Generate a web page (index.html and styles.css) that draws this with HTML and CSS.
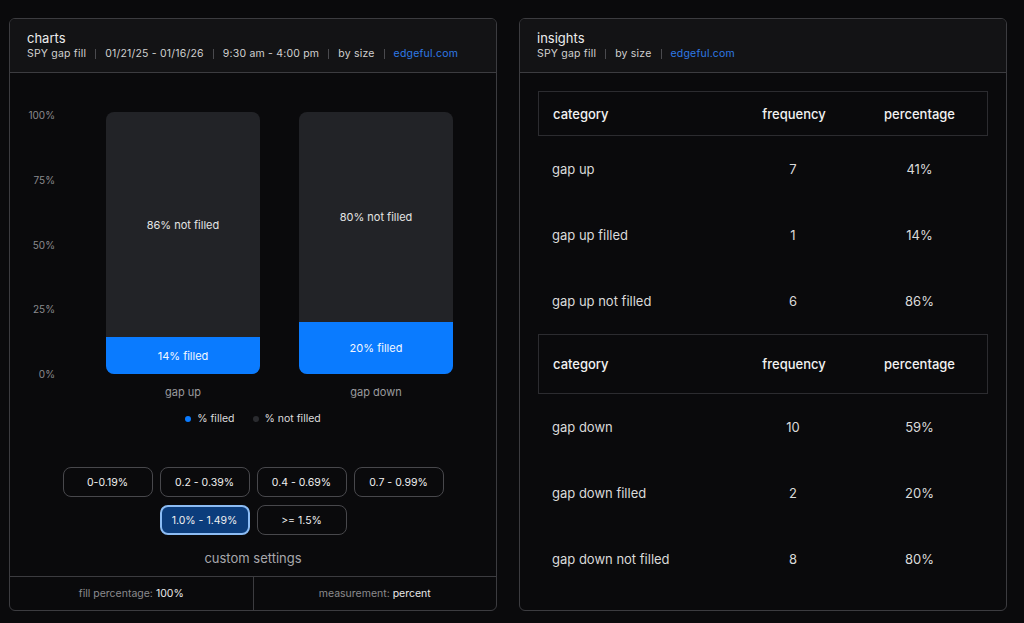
FILE: index.html
```html
<!DOCTYPE html>
<html lang="en">
  <head>
    <meta charset="UTF-8" />
    <meta name="viewport" content="width=device-width, initial-scale=1.0" />
    <title>SPY gap fill</title>
    <link rel="stylesheet" href="styles.css">
  </head>

  <body>
    <main class="page">
      <section class="card">
        <div class="card-head">
          <div class="card-title">charts</div>
          <div class="card-sub">
            <span>SPY gap fill</span><i class="sep"></i>
            <span>01/21/25 - 01/16/26</span><i class="sep"></i>
            <span>9:30 am - 4:00 pm</span><i class="sep"></i>
            <span>by size</span><i class="sep"></i>
            <span class="link">edgeful.com</span>
          </div>
        </div>

        <div class="chart-body">
          <div class="chart">
            <div class="axis">
              <span>100%</span>
              <span>75%</span>
              <span>50%</span>
              <span>25%</span>
              <span>0%</span>
            </div>
            <div class="bars">
              <div class="bar-col">
                <div class="bar">
                  <div class="bar-rest">86% not filled</div>
                  <div class="bar-fill" style="height: 14%">14% filled</div>
                </div>
                <div class="bar-name">gap up</div>
              </div>
              <div class="bar-col">
                <div class="bar">
                  <div class="bar-rest">80% not filled</div>
                  <div class="bar-fill" style="height: 20%">20% filled</div>
                </div>
                <div class="bar-name">gap down</div>
              </div>
            </div>
          </div>

          <div class="legend">
            <span><i class="dot blue"></i>% filled</span>
            <span><i class="dot grey"></i>% not filled</span>
          </div>

          <div class="ranges">
            <button>0-0.19%</button>
            <button>0.2 - 0.39%</button>
            <button>0.4 - 0.69%</button>
            <button>0.7 - 0.99%</button>
            <button class="active">1.0% - 1.49%</button>
            <button>&gt;= 1.5%</button>
          </div>

          <div class="custom">custom settings</div>

          <div class="card-foot">
            <div>fill percentage: <b>100%</b></div>
            <div>measurement: <b>percent</b></div>
          </div>
        </div>
      </section>

      <section class="card">
        <div class="card-head">
          <div class="card-title">insights</div>
          <div class="card-sub">
            <span>SPY gap fill</span><i class="sep"></i>
            <span>by size</span><i class="sep"></i>
            <span class="link">edgeful.com</span>
          </div>
        </div>

        <div class="table-body">
          <div class="trow thead first">
            <span>category</span><span>frequency</span><span>percentage</span>
          </div>
          <div class="trow"><span>gap up</span><span>7</span><span>41%</span></div>
          <div class="trow"><span>gap up filled</span><span>1</span><span>14%</span></div>
          <div class="trow"><span>gap up not filled</span><span>6</span><span>86%</span></div>
          <div class="trow thead">
            <span>category</span><span>frequency</span><span>percentage</span>
          </div>
          <div class="trow"><span>gap down</span><span>10</span><span>59%</span></div>
          <div class="trow"><span>gap down filled</span><span>2</span><span>20%</span></div>
          <div class="trow"><span>gap down not filled</span><span>8</span><span>80%</span></div>
        </div>
      </section>
    </main>
  </body>
</html>
```

FILE: styles.css
```css
body {
  margin: 0;
  font-family: Inter, "Open Sans", "DejaVu Sans", sans-serif;
  background: #0a0a0c;
  color: #e6e6e6;
}

.page {
  display: flex;
  gap: 22px;
  height: 623px;
  padding: 18px 17px 12px 9px;
  box-sizing: border-box;
}

.card {
  flex: 1;
  display: flex;
  flex-direction: column;
  border: 1px solid #3c3c40;
  border-radius: 6px;
  overflow: hidden;
}

.card-head {
  background: #131315;
  border-bottom: 1px solid #3c3c40;
  padding: 11px 17px 10px;
}

.card-title {
  font-size: 13px;
  line-height: 16px;
  color: #ececec;
}

.card-sub {
  display: flex;
  align-items: center;
  font-size: 10.5px;
  line-height: 16px;
  letter-spacing: 0.2px;
  color: #d0d0d0;
}

.sep {
  width: 1px;
  height: 10px;
  margin: 0 9px;
  background: #4a4a4e;
}

.link {
  color: #2f7ae6;
}

/* chart card */

.chart-body {
  flex: 1;
  display: flex;
  flex-direction: column;
}

.chart {
  display: flex;
  padding: 36px 0 0 17px;
}

.axis {
  width: 28px;
  height: 271px;
  display: flex;
  flex-direction: column;
  justify-content: space-between;
  align-items: flex-end;
  font-size: 10px;
  line-height: 12px;
  color: #8a8a8e;
}

.bars {
  display: flex;
  gap: 39px;
  margin: 3px 0 0 51px;
}

.bar-col {
  width: 154px;
  display: flex;
  flex-direction: column;
}

.bar {
  height: 262px;
  display: flex;
  flex-direction: column;
  border-radius: 8px;
  overflow: hidden;
  background: #222327;
  font-size: 11px;
  color: #e4e4e4;
}

.bar-rest {
  flex: 1;
  display: flex;
  align-items: center;
  justify-content: center;
}

.bar-fill {
  display: flex;
  align-items: center;
  justify-content: center;
  background: #0a7bff;
  color: #f4f8ff;
}

.bar-name {
  margin-top: 10px;
  text-align: center;
  font-size: 11px;
  line-height: 16px;
  color: #9a9a9e;
}

.legend {
  display: flex;
  justify-content: center;
  gap: 18px;
  margin-top: 11px;
  font-size: 10.5px;
  line-height: 16px;
  color: #dcdcdc;
}

.legend span {
  display: flex;
  align-items: center;
}

.dot {
  width: 6px;
  height: 6px;
  border-radius: 50%;
  margin-right: 6px;
}

.dot.blue {
  background: #0a7bff;
}

.dot.grey {
  background: #2a2b2f;
}

.ranges {
  display: flex;
  flex-wrap: wrap;
  justify-content: center;
  gap: 8px 7px;
  width: 390px;
  margin: 40px auto 0;
}

.ranges button {
  width: 90px;
  height: 30px;
  font-family: inherit;
  font-size: 10.5px;
  color: #f0f0f0;
  background: transparent;
  border: 1px solid #48484c;
  border-radius: 8px;
  cursor: pointer;
}

.ranges button.active {
  background: #0c3d7c;
  border: 2px solid #8cbcf4;
}

.custom {
  margin-top: 13px;
  text-align: center;
  font-size: 13px;
  line-height: 20px;
  color: #a8a8ac;
}

.card-foot {
  margin-top: auto;
  display: flex;
  border-top: 1px solid #3c3c40;
  height: 33px;
  font-size: 10.5px;
  color: #8a8a8e;
}

.card-foot div {
  flex: 1;
  display: flex;
  align-items: center;
  justify-content: center;
}

.card-foot div + div {
  border-left: 1px solid #3c3c40;
}

.card-foot b {
  font-weight: 400;
  color: #e8e8e8;
  margin-left: 3px;
}

/* insights table */

.table-body {
  padding: 18px 18px 0;
}

.trow {
  display: grid;
  grid-template-columns: 197px 116px 1fr;
  align-items: center;
  height: 66px;
  font-size: 13px;
  color: #dadada;
}

.trow span {
  text-align: center;
}

.trow span:first-child {
  text-align: left;
  padding-left: 14px;
}

.thead {
  height: 58px;
  border: 1px solid #2c2c30;
  color: #f2f2f2;
  font-weight: 500;
}

.thead.first {
  height: 43px;
}
```
